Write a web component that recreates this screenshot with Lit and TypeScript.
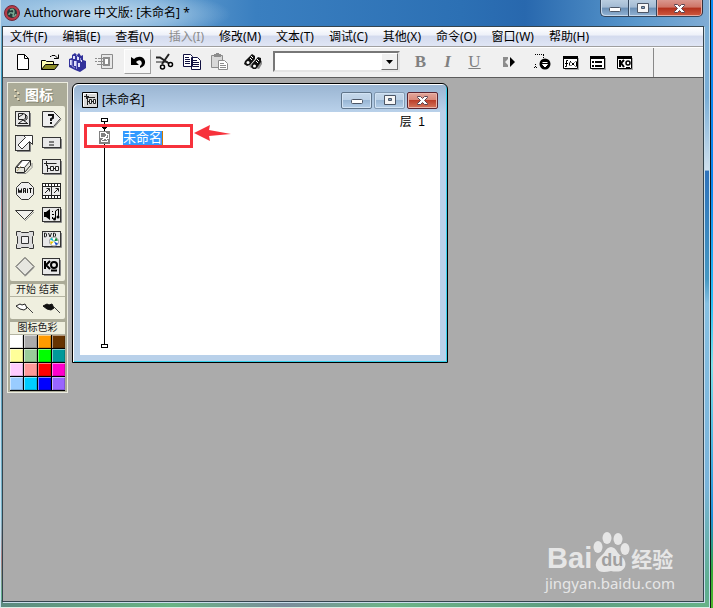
import { LitElement, html, svg, css, TemplateResult } from "lit";
import { customElement, property } from "lit/decorators.js";

/* ---------- toolbar glyphs, 20 x 20 grid ---------- */
const glyphs: Record<string, TemplateResult> = {
  new: svg`<path d="M4.500 2.500h7l4 4v11h-11z" fill="#fff" stroke="#000"/><path d="M11.500 2.500v4h4" fill="none" stroke="#000"/>`,
  open: svg`<path d="M1.500 17.500v-9h4l1 1h7v3" fill="#ffffb4" stroke="#000"/><path d="M1.500 17.500l4-5h13l-4 5z" fill="#8c8c28" stroke="#000"/><path d="M10 4.500h1l1-1h3l3 3M14 6.500h4.500v-4" fill="none" stroke="#000"/>`,
  save: svg`<path d="M2 7l3-1V3l3-2 2 2 2-2 2 3 2-1v5l3 1v7l-6 4-5-2-6-3z" fill="#32329b"/><path d="M3 8h2v5H3zM6 4h2v3H6zM10 5h2v3h-2zM7 9h2v5H7zM11 11h2v4h-2zM14 8h1v2h-1z" fill="#e0e0fa"/><path d="M5 14l3 2M9 3l2 2M5 8v6M9.500 9v8M13.500 6v3" stroke="#9090d8"/>`,
  importing: svg`<path d="M7.500 2.500h11v14h-11z" fill="#e8e8e8" stroke="#8c8c8c"/><path d="M10 6h5v7h-5z" fill="#fff" stroke="#8c8c8c" stroke-width="2"/><path d="M1 6.500h2m1 0h6M1 9.500h2m1 0h6M3 12.500h7" stroke="#8c8c8c"/>`,
  undo: svg`<path d="M3 5v8h8L8 10q3-3 5-1 2 3-1 5v2q6-2 5-7-2-5-7-4-2 0-4 2z" fill="#000"/>`,
  cut: svg`<path d="M1 5.500h4l9 6M14 2l-7 10" fill="none" stroke="#222" stroke-width="2"/><circle cx="15.500" cy="12.500" r="2" fill="#fff" stroke="#000" stroke-width="1.500"/><circle cx="7.500" cy="15" r="2" fill="#fff" stroke="#000" stroke-width="1.500"/><path d="M13 10H1" stroke="#222"/>`,
  copy: svg`<path d="M1.500 2.500h7l2 2v10h-9zM9.500 5.500h6l3 3v9h-9z" fill="#fff" stroke="#101040"/><path d="M3 5.500h4M3 7.500h5M3 9.500h5M3 11.500h5M11 8.500h4M11 10.500h6M11 12.500h6M11 14.500h6" stroke="#101040"/>`,
  paste: svg`<path d="M2.500 3.500h11v12h-11z" fill="#d8d8d8" stroke="#8c8c8c"/><path d="M5 2h2V1h3v1h2v3H5z" fill="#8c8c8c"/><path d="M9.500 8.500h6l3 3v6h-9z" fill="#fff" stroke="#8c8c8c"/><path d="M11 11.500h4M11 13.500h6M11 15.500h6" stroke="#8c8c8c"/>`,
  find: svg`<path d="M13 16l4-8 2 1v3l-3 5zM6 14l5-4 1 3-4 3z" fill="#8c8c8c"/><path d="M2 9l7-7 3 2v3l-5 6-3 1-3-2zM9 12l6-7 3 1v4l-5 7h-3l-2-2z" fill="#111"/><circle cx="5" cy="10.500" r="1.500" fill="#fff"/><circle cx="11.500" cy="14" r="1.500" fill="#fff"/><path d="M8 4l2 2M7 6l2 2M14 7l2 2M13 9l2 2" stroke="#fff"/>`,
  play: svg`<path d="M4 5h5v2l-3 3 3 3v2H4z" fill="#8c8c8c"/><path d="M11 5l5 5-5 5z" fill="#000"/>`,
  flag: svg`<path d="M2 2.500h9" stroke="#000" stroke-dasharray="1 1"/><path d="M2.500 12v4M1 15.500h3M10.500 3v3" stroke="#000" stroke-dasharray="1 1"/><circle cx="12" cy="12" r="5.500" fill="#000"/><path d="M9.500 10.500h5M9.500 12.500h5l-2.500 2.500z" stroke="#fff" fill="#fff"/>`,
  func: svg`<path d="M5 17h13V6h1v12H5z" fill="#aaa"/><path d="M3.500 4.500h14v12h-14z" fill="#fff" stroke="#000"/><path d="M3 4h15v3H3z"/><path d="M8 8.500H6.500v6H5M5 11.500h3M10.500 9v1l-1 1v2l1 1M15.500 9l1 1v4l-1 1M11.500 10.500l3 3M14.500 10.500l-3 3" fill="none" stroke="#000"/>`,
  list: svg`<path d="M5 17h13V6h1v12H5z" fill="#aaa"/><path d="M3.500 4.500h14v12h-14z" fill="#fff" stroke="#000"/><path d="M3 4h15v3H3zM5 9h2v2H5zM8 9h7v2H8zM5 13h2v2H5zM8 13h7v2H8z"/>`,
  ko: svg`<path d="M5 17h13V6h1v12H5z" fill="#aaa"/><path d="M3.500 4.500h14v12h-14z" fill="#fff" stroke="#000"/><path d="M3 4h15v3H3z"/><path d="M6 8v7M10 8l-3 3 3 4" fill="none" stroke="#000" stroke-width="2"/><circle cx="14" cy="11" r="2" fill="none" stroke="#000" stroke-width="1.500"/><path d="M12 15.500h4" stroke="#000"/>`,
};

/* ---------- palette glyphs, 22 x 22 grid ---------- */
const box = (w: number, y: number, h: number) => svg`
  <path d="M3 ${y + h + 0.5}H${w + 2.5}V${y + 1}" fill="none" stroke="#888"/>
  <rect x="1.500" y="${y - 0.5}" width="${w}" height="${h}" fill="#e8e8e8" stroke="#333"/>`;

const tools: { name: string; art: TemplateResult }[] = [
  { name: "显示", art: svg`${box(14, 4, 14)}<path d="M4.500 5.500h5l2 1v4l-2 1h-5zM4.500 9l5-3M11 6l2 2v3l-3 2M9 12l-4 3M9 12l4 3M4 15.500h10" fill="none" stroke="#222"/>` },
  { name: "决策提问", art: svg`<path d="M3 19.500h10l7-8" fill="none" stroke="#888"/><path d="M1.500 3.500h11l7 7-7 8h-11z" fill="#eee" stroke="#333"/><path d="M8 8V7h4v3l-2 1v2M10 14v2" fill="none" stroke="#111" stroke-width="2"/>` },
  { name: "移动", art: svg`${box(14, 4, 15)}<path d="M9.500 3.500h9v9l-3-3-7.500 7.500-4-4 7.500-7.500z" fill="#fff" stroke="#333"/>` },
  { name: "计算", art: svg`${box(18, 6, 10)}<path d="M8 10h5M8 13h5" stroke="#111"/>` },
  { name: "擦除", art: svg`<path d="M3 17.500h9l6-6V7" fill="none" stroke="#888"/><path d="M1.500 11.500l6-7h9v5l-6 7h-9z" fill="#e4e4dc" stroke="#222"/><path d="M2.500 11.500l6-7h8l-6 7z" fill="#fff" stroke="#333"/><path d="M10.500 12v4" stroke="#333"/><path d="M3 15l4-5" stroke="#b8a870"/>` },
  { name: "群组", art: svg`${box(18, 4, 14)}<path d="M5.500 5v5M3 7.500h5M5.500 7.500h10M6.500 9v7M7 12.500h11" fill="none" stroke="#222"/><path d="M9.500 10.500h3v4h-3zM14.500 10.500h3v4h-3z" fill="#eee" stroke="#222"/>` },
  { name: "等待", art: svg`<path d="M7.500 2.500h7l5 5v7l-5 5h-7l-5-5v-7z" fill="#eee" stroke="#333"/><path d="M4.500 8.500v4h1v-2h1v2h1v-4M9.500 13V8.500h2V13M9.500 11h2M13.500 8.500v4.500M15 8.500h3M16.500 8.500v4.500" fill="none" stroke="#111"/>` },
  { name: "数字电影", art: svg`<path d="M1 3h19v16H1z" fill="#222"/><path d="M2 7h8v8H2zM11 7h8v8h-8z" fill="#eee"/><path d="M2 5h17M2 17h17" stroke="#fff" stroke-width="2" stroke-dasharray="2 1"/><path d="M4 13l4-4M5.500 8.500h3v3M13 13l4-4M14.500 8.500h3v3" fill="none" stroke="#222"/>` },
  { name: "导航", art: svg`<path d="M1.500 6.500h18l-9 9z" fill="#f0f0ec" stroke="#333"/><path d="M11 17l9-9" stroke="#999"/>` },
  { name: "声音", art: svg`${box(18, 4, 14)}<path d="M3 8h2l4-3v11l-4-3H3z" fill="#000"/><path d="M11.500 7v1M11 10.500h2M11.500 13v2M14.500 15V7l3-2v8" fill="none" stroke="#000"/><circle cx="13.500" cy="15" r="1.500"/><circle cx="17" cy="13" r="1.500"/>` },
  { name: "框架", art: svg`<path d="M2.500 2.500h4l1 1h7l1-1h4v4l-1 1v7l1 1v4h-4l-1-1h-7l-1 1h-4v-4l1-1v-7l-1-1z" fill="#ddd" stroke="#333"/><path d="M7.500 7.500h7v7h-7z" fill="#eee" stroke="#333"/>` },
  { name: "DVD", art: svg`${box(18, 3, 15)}<path d="M3.500 4v4h1l1-1V5l-1-1zM7.500 4l1.500 4 1.500-4M12.500 4v4h1l1-1V5l-1-1z" fill="none" stroke="#222"/><circle cx="13" cy="12.500" r="4.500" fill="#fff" stroke="#999"/><path d="M13 12.500l-4-2 2-2z" fill="#15b9c8"/><path d="M13 12.500l2-4 2 3z" fill="#128a30"/><path d="M13 12.500l4 2-2 2z" fill="#1550d0"/><path d="M13 12.500l-3 3-1-3z" fill="#e6c400"/>` },
  { name: "判断", art: svg`<path d="M11 20.500l9-9" stroke="#999"/><path d="M11 1.500l9 9-9 9-9-9z" fill="#e6e6e0" stroke="#444"/>` },
  { name: "知识对象", art: svg`${box(17, 3, 16)}<path d="M4 5v8M9 5l-4 4 4 4" fill="none" stroke="#000" stroke-width="2"/><circle cx="13" cy="9" r="3" fill="none" stroke="#000" stroke-width="2"/><path d="M10 14.500h6" stroke="#000" stroke-width="2"/>` },
];

const swatches = [
  "#ffffff", "#ababab", "#ff9a00", "#663300",
  "#ffff99", "#99cc99", "#00ff00", "#009999",
  "#ffccff", "#ff9999", "#ff0000", "#ff00cc",
  "#99ccff", "#00ccff", "#0000ff", "#9966ff",
];

@customElement("caption-buttons")
export class CaptionButtons extends LitElement {
  @property({ type: Boolean, reflect: true }) framed = false;

  static styles = css`
    :host { display: flex; }
    button {
      box-sizing: border-box; width: 28px; height: 17px; padding: 0;
      display: flex; align-items: center; justify-content: center;
      border: 1px solid #34475e; border-top: 0; border-right: 0;
      background: linear-gradient(#b9cde0 0, #a2bad3 45%, #6b8fb5 50%, #92b3d4 100%);
      box-shadow: inset 1px -1px 0 #c6d8ea;
    }
    .min { border-bottom-left-radius: 5px; }
    .close {
      width: 47px; border-right: 1px solid #34303c; border-bottom-right-radius: 5px;
      background: linear-gradient(#d9978e 0, #cf7466 45%, #b2301c 50%, #cf5a40 100%);
      box-shadow: inset 1px -1px 0 #e7aaa0, inset -1px 0 0 #e7aaa0;
    }
    svg { display: block; }
    :host([framed]) { gap: 2px; }
    :host([framed]) button {
      width: 31px; border: 1px solid #5f7489; border-radius: 2px;
      background: linear-gradient(#c5d8ea 0, #bbd0e6 48%, #98b6d4 50%, #b5cfe9 100%);
      box-shadow: inset 0 0 0 1px #d2e3f4;
    }
    :host([framed]) .max { border-color: #8198b0; }
    :host([framed]) .close {
      border-color: #5b2430;
      background: linear-gradient(#e3a79c 0, #d98878 48%, #bb3f2a 50%, #d5765c 100%);
      box-shadow: inset 0 0 0 1px #eab5aa;
    }
  `;

  render() {
    return html`
      <button class="min" aria-label="最小化"><svg width="14" height="10"><rect x="1.500" y="4.500" width="11" height="4" rx="1" fill="#fff" stroke="#4c5666"/></svg></button>
      <button class="max" aria-label="最大化"><svg width="12" height="10"><path d="M.5.500h11v9H.5z" fill="#f6f6f6" stroke="#4c5666"/><path d="M4.500 3.500h3v2h-3z" fill="#87a8c8" stroke="#4c5666"/></svg></button>
      <button class="close" aria-label="关闭"><svg width="13" height="11"><path d="M1.500 1.500h3l2 2 2-2h3v1l-3 3 3 3v1h-3l-2-2-2 2h-3v-1l3-3-3-3z" fill="#fff" stroke="#5a4450"/></svg></button>
    `;
  }
}

@customElement("icon-palette")
export class IconPalette extends LitElement {
  static styles = css`
    :host {
      display: block; box-sizing: border-box; width: 61px; padding: 1px;
      border: 1px solid #ecece0; background: #abab98;
      font-family: "Liberation Sans", "Noto Sans CJK SC", sans-serif;
    }
    header { display: flex; align-items: center; height: 22px; gap: 5px; padding-left: 4px; color: #fff; }
    h2 { margin: 0; font-size: 14px; line-height: 20px; text-shadow: 1px 1px 0 #888874; }
    section { margin: 0 1px 3px; background: #efefdf; border-radius: 2px; }
    svg { display: block; }
    button { padding: 0; border: 0; background: none; display: grid; place-items: center; }
    .tools { display: grid; grid-template-columns: 1fr 1fr; grid-template-rows: repeat(5, 24px) 26px 28px; padding-top: 1px; }
    .tools svg { margin: 0 -1px 0 1px; }
    .caption { font-size: 10px; line-height: 12px; text-align: center; color: #222; white-space: pre; border-bottom: 1px solid #b4b4a2; }
    .flags { display: grid; grid-template-columns: 1fr 1fr; height: 22px; }
    .colors { margin-bottom: 0; border-radius: 0; }
    .swatches { display: grid; grid-template-columns: repeat(4, 14px); grid-auto-rows: 14px; background: #000; }
    .swatch { margin: 0 1px 1px 0; box-shadow: inset 1px 1px 0 #ffffff80, inset -1px -1px 0 #00000028; }
  `;

  render() {
    return html`
      <header>
        <svg width="7" height="16" shape-rendering="crispEdges"><path d="M1 2h2v2H1zM4 5h2v2H4zM1 8h2v2H1zM4 11h2v2H4z" fill="#e4d8b8"/><path d="M2 4h2v1H2zM5 7h2v1H5zM2 10h2v1H2zM5 13h2v1H5z" fill="#77715c"/></svg>
        <h2>图标</h2>
      </header>
      <section class="tools">
        ${tools.map((t) => html`<button aria-label=${t.name}><svg width="22" height="22">${t.art}</svg></button>`)}
      </section>
      <section>
        <div class="caption">开始 结束</div>
        <div class="flags">
          <button aria-label="开始标志"><svg width="20" height="14"><path d="M2 5l4-2 2 1 3-1 2 4-3 2-4-1z" fill="#fff" stroke="#222"/><path d="M12 5l7 7" stroke="#444"/></svg></button>
          <button aria-label="结束标志"><svg width="20" height="14"><path d="M2 5l4-2 2 1 3-1 2 4-3 2-4-1z" fill="#111" stroke="#111"/><path d="M12 5l7 7" stroke="#444"/></svg></button>
        </div>
      </section>
      <section class="colors">
        <div class="caption">图标色彩</div>
        <div class="swatches">
          ${swatches.map((c) => html`<button class="swatch" aria-label=${c} style="background:${c}"></button>`)}
        </div>
      </section>
    `;
  }
}

@customElement("design-window")
export class DesignWindow extends LitElement {
  static styles = css`
    :host {
      display: block; box-sizing: border-box; width: 376px; padding: 0 7px 7px;
      border: 1px solid #000; border-radius: 6px 6px 0 0;
      background: linear-gradient(#99b4d1 0, #b9d1ea 28px);
      box-shadow: inset 1px 1px 0 #fff, inset -1px -1px 0 #35d0ea;
      font-family: "Liberation Sans", "Noto Sans CJK SC", sans-serif; font-size: 12px;
    }
    header { display: flex; align-items: center; height: 28px; gap: 4px; padding: 4px 2px 0; box-sizing: border-box; }
    h2 { margin: 0; flex: 1; font-weight: 400; font-size: 12px; line-height: 16px; }
    svg { display: block; }
    .canvas { position: relative; height: 243px; background: #fff; }
    .line { position: absolute; left: 19px; top: 5px; }
    .level { position: absolute; right: 15px; top: 2px; line-height: 16px; white-space: pre; }
    .name {
      position: absolute; left: 43px; top: 19px; box-sizing: border-box; width: 40px; height: 14px;
      padding: 0; border: 0; border-right: 1px solid #d07800; outline: 0; border-radius: 0;
      background: #3399ff; color: #fff; font: 13px/14px "Liberation Sans", "Noto Sans CJK SC", sans-serif;
    }
    .mark { position: absolute; left: 4px; top: 12px; box-sizing: border-box; width: 109px; height: 24px; border: 3px solid #f7323c; }
    .arrow { position: absolute; left: 114px; top: 12px; }
  `;

  render() {
    return html`
      <header>
        <svg width="16" height="16"><path d="M.5.500h15v15H.5z" fill="#d8d8d8" stroke="#000"/><path d="M1.500 14V1.500H14" fill="none" stroke="#fff"/><path d="M4.500 2v5M2 4.500h5M5 5.500h8M5.500 6v7M6 9.500h8" fill="none" stroke="#222"/><path d="M7.500 7.500h2v4h-2zM11.500 7.500h2v4h-2z" fill="#eee" stroke="#222"/></svg>
        <h2>[未命名]</h2>
        <caption-buttons framed></caption-buttons>
      </header>
      <div class="canvas">
        <svg class="line" width="14" height="232" shape-rendering="crispEdges">
          <path d="M5 5h1v226H5z"/><path d="M2.500 1.500h6v3h-6z" fill="#fff" stroke="#000"/>
          <path d="M3 10h5v1H7v1H6v1H5v-1H4v-1H3z"/>
          <path d="M2.500 227.500h6v3h-6z" fill="#fff" stroke="#000"/>
          <path d="M0 14h11v13H0z" fill="#808080"/>
          <path d="M1.500 15.500h4l2 1v3l-2 1h-4zM7.500 17l2 1v3l-2 1M6 21l-4 3M6 21l3 3M2 24.500h7" fill="none" stroke="#fff"/>
        </svg>
        <div class="level">层  1</div>
        <input class="name" aria-label="图标名称" value="未命名" />
        <div class="mark"></div>
        <svg class="arrow" width="38" height="18"><path d="M0 9L16 1l-1 5 22 4-22 2 1 5z" fill="#f7323c"/></svg>
      </div>
    `;
  }
}

@customElement("app-root")
export class AppRoot extends LitElement {
  static styles = css`
    :host {
      display: flex; box-sizing: border-box; min-height: 100vh; padding-right: 2px;
      background: linear-gradient(#0a8af0 0, #0c86ec 30%, #2cc0f4 50%, #7fe0e8 60%, #2090d8 85%, #38a838 94%, #50b82c 100%);
      font-family: "Noto Sans", "Noto Sans CJK SC", sans-serif; font-size: 12px; color: #000;
    }
    svg { display: block; }
    .frame {
      flex: 1; display: flex; flex-direction: column; min-width: 0; padding: 0 5px 5px 1px;
      border: 1px solid #c8e0ee; border-width: 0 1px 1px; border-bottom-color: #dcefe6;
      outline: 1px solid #10181c; outline-offset: 0;
      margin-right: 1px;
      background:
        linear-gradient(90deg, #5c8a80, #68b484 24%, #7a8c9c 40%, #6cb487 55%, #5c9c80 80%, #66b287) bottom / 100% 7px no-repeat,
        linear-gradient(#7aaed6 0, #7aaed6 16%, #cfe0ee 28%, #2e72ba 28.200%, #4698c2 46%, #86c0e2 50%, #7ab4da 80%, #5fae90 96%) right / 8px 100% no-repeat,
        linear-gradient(#8fb8d8 0, #3a9cc0 12%, #2e80bc 25%, #b87c80 35%, #4a94b8 50%, #7ab4c8 85%, #b08080 92%, #62b08c 98%);
    }
    .title {
      display: flex; align-items: center; justify-content: space-between; height: 26px;
      margin: 0 -5px 0 -1px; padding: 0 6px 0 3px;
      background:
        radial-gradient(ellipse 130px 26px at 100px 14px, #cde2f2e0, #a8cce8a0 60%, #80b0d800 100%),
        linear-gradient(90deg, #8cb8dc 0, #5c98cc 25%, #3a7fc0 36%, #2c70b4 65%, #2868ae 74%, #5a98cc 90%, #80acd4 100%);
    }
    .title caption-buttons { align-self: flex-start; }
    .brand { display: flex; align-items: center; gap: 4px; height: 24px; }
    h1 { margin: 0; font-size: 12px; line-height: 16px; font-weight: 400; white-space: nowrap; }
    .client { flex: 1; display: flex; flex-direction: column; border: 1px solid #34444e; box-shadow: 1px 1px 0 #c8dcea; }
    .menu {
      display: flex; gap: 15px; height: 19px; padding: 0 7px; border-bottom: 1px solid #a0a0a0; overflow: hidden;
      background: linear-gradient(#fff 0, #eef1f9 40%, #d4dbee 50%, #e0e6f5 100%);
    }
    .menu button { padding: 0; border: 0; background: none; font: inherit; line-height: 18px; white-space: nowrap; color: #000; }
    .menu button:disabled { color: #8c8c8c; }
    .bar {
      display: flex; align-items: center; gap: 7px; box-sizing: border-box; height: 31px; padding: 0 6px 2px;
      background: #f0f0f0; border-top: 1px solid #fff; border-bottom: 1px solid #5c5c5c; overflow: hidden;
    }
    .group { display: flex; flex: none; }
    .group button {
      box-sizing: border-box; width: 27px; height: 25px; padding: 0; border: 1px solid transparent; background: none;
      display: grid; place-items: center; color: #808080; font: bold 17px/20px "Liberation Serif", serif;
    }
    .group .raised { border-color: #fff #a0a0a0 #a0a0a0 #fff; background: #f6f6f6; }
    .group .italic { font-style: italic; }
    .group .under { font-weight: 400; text-decoration: underline; }
    .combo { position: relative; width: 127px; height: 21px; flex: none; }
    select {
      appearance: none; display: block; width: 100%; height: 100%; box-sizing: border-box; border-radius: 0;
      border: 2px solid; border-color: #777 #e4e4e4 #e4e4e4 #777; background: #fff;
    }
    .drop {
      position: absolute; right: 2px; top: 2px; bottom: 2px; width: 15px; display: grid; place-items: center; pointer-events: none;
      background: #f0f0f0; border: 1px solid; border-color: #fff #707070 #707070 #fff;
    }
    .edge { align-self: stretch; width: 1px; margin: 0 0 -2px 9px; background: #888; }
    .work { position: relative; flex: 1; display: flex; align-items: flex-start; gap: 4px; padding: 4px; background: #ababab; }
    design-window { margin-top: 1px; }
    .mark { position: absolute; right: 28px; bottom: 9px; color: #e6e6e6; }
    .logo { display: flex; align-items: flex-end; height: 42px; padding: 0 0 2px 2px; }
    .logo b { font: bold 29px/28px "Liberation Sans", sans-serif; }
    .paw { position: relative; width: 39px; height: 42px; }
    .paw span { position: absolute; left: 9px; top: 20px; font: bold 18px/20px "Liberation Sans", sans-serif; color: #a0a0a0; }
    .logo strong { font: bold 21px/28px "Noto Sans CJK SC", sans-serif; }
    .site { display: block; font: 15px/18px "Noto Sans", sans-serif; color: inherit; text-decoration: none; }
  `;

  private menus = ["文件(F)", "编辑(E)", "查看(V)", "插入(I)", "修改(M)", "文本(T)", "调试(C)", "其他(X)", "命令(O)", "窗口(W)", "帮助(H)"];

  private group(items: [string, string][]) {
    return html`<div class="group">
      ${items.map(([key, label]) => html`<button class=${key === "undo" ? "raised" : ""} aria-label=${label}>
        <svg width="20" height="20">${glyphs[key]}</svg>
      </button>`)}
    </div>`;
  }

  render() {
    return html`
      <div class="frame">
        <div class="title">
          <div class="brand">
            <svg width="16" height="16"><circle cx="8" cy="8" r="7.500" fill="#b83c48" stroke="#70283a"/><circle cx="8" cy="8" r="5" fill="#243c3c"/><path d="M5 10q0-3 3-2l2 1M6 5q4-2 4 2l-1 4q2 1 3-2" fill="none" stroke="#78a890" stroke-width="1.500"/></svg>
            <h1>Authorware 中文版: [未命名] *</h1>
          </div>
          <caption-buttons></caption-buttons>
        </div>
        <div class="client">
          <nav class="menu">
            ${this.menus.map((m) => html`<button ?disabled=${m === "插入(I)"}>${m}</button>`)}
          </nav>
          <div class="bar">
            ${this.group([["new", "新建"], ["open", "打开"], ["save", "保存全部"], ["importing", "导入"]])}
            ${this.group([["undo", "撤消"], ["cut", "剪切"], ["copy", "复制"], ["paste", "粘贴"]])}
            ${this.group([["find", "查找"]])}
            <div class="combo">
              <select aria-label="文本样式"><option></option></select>
              <div class="drop"><svg width="7" height="4"><path d="M0 0h7L3.500 4z"/></svg></div>
            </div>
            <div class="group">
              <button>B</button><button class="italic">I</button><button class="under">U</button>
            </div>
            ${this.group([["play", "运行"]])}
            ${this.group([["flag", "控制面板"], ["func", "函数"], ["list", "变量"], ["ko", "知识对象"]])}
            <div class="edge"></div>
          </div>
          <main class="work">
            <icon-palette></icon-palette>
            <design-window></design-window>
            <div class="mark">
              <div class="logo">
                <b>Bai</b>
                <div class="paw">
                  <svg width="38" height="42" fill="#e6e6e6"><ellipse cx="6" cy="17" rx="4.500" ry="6"/><ellipse cx="15" cy="8" rx="4.500" ry="6"/><ellipse cx="26" cy="9" rx="4.500" ry="6"/><ellipse cx="33" cy="19" rx="4.500" ry="6"/><path d="M19 17q4 0 7 6l6 6q4 8-3 12-5 1-10 0-8 2-12 0-6-5-1-12l6-6q3-6 7-6z"/></svg>
                  <span>du</span>
                </div>
                <strong>经验</strong>
              </div>
              <a class="site" href="#">jingyan.baidu.com</a>
            </div>
          </main>
        </div>
      </div>
    `;
  }
}
